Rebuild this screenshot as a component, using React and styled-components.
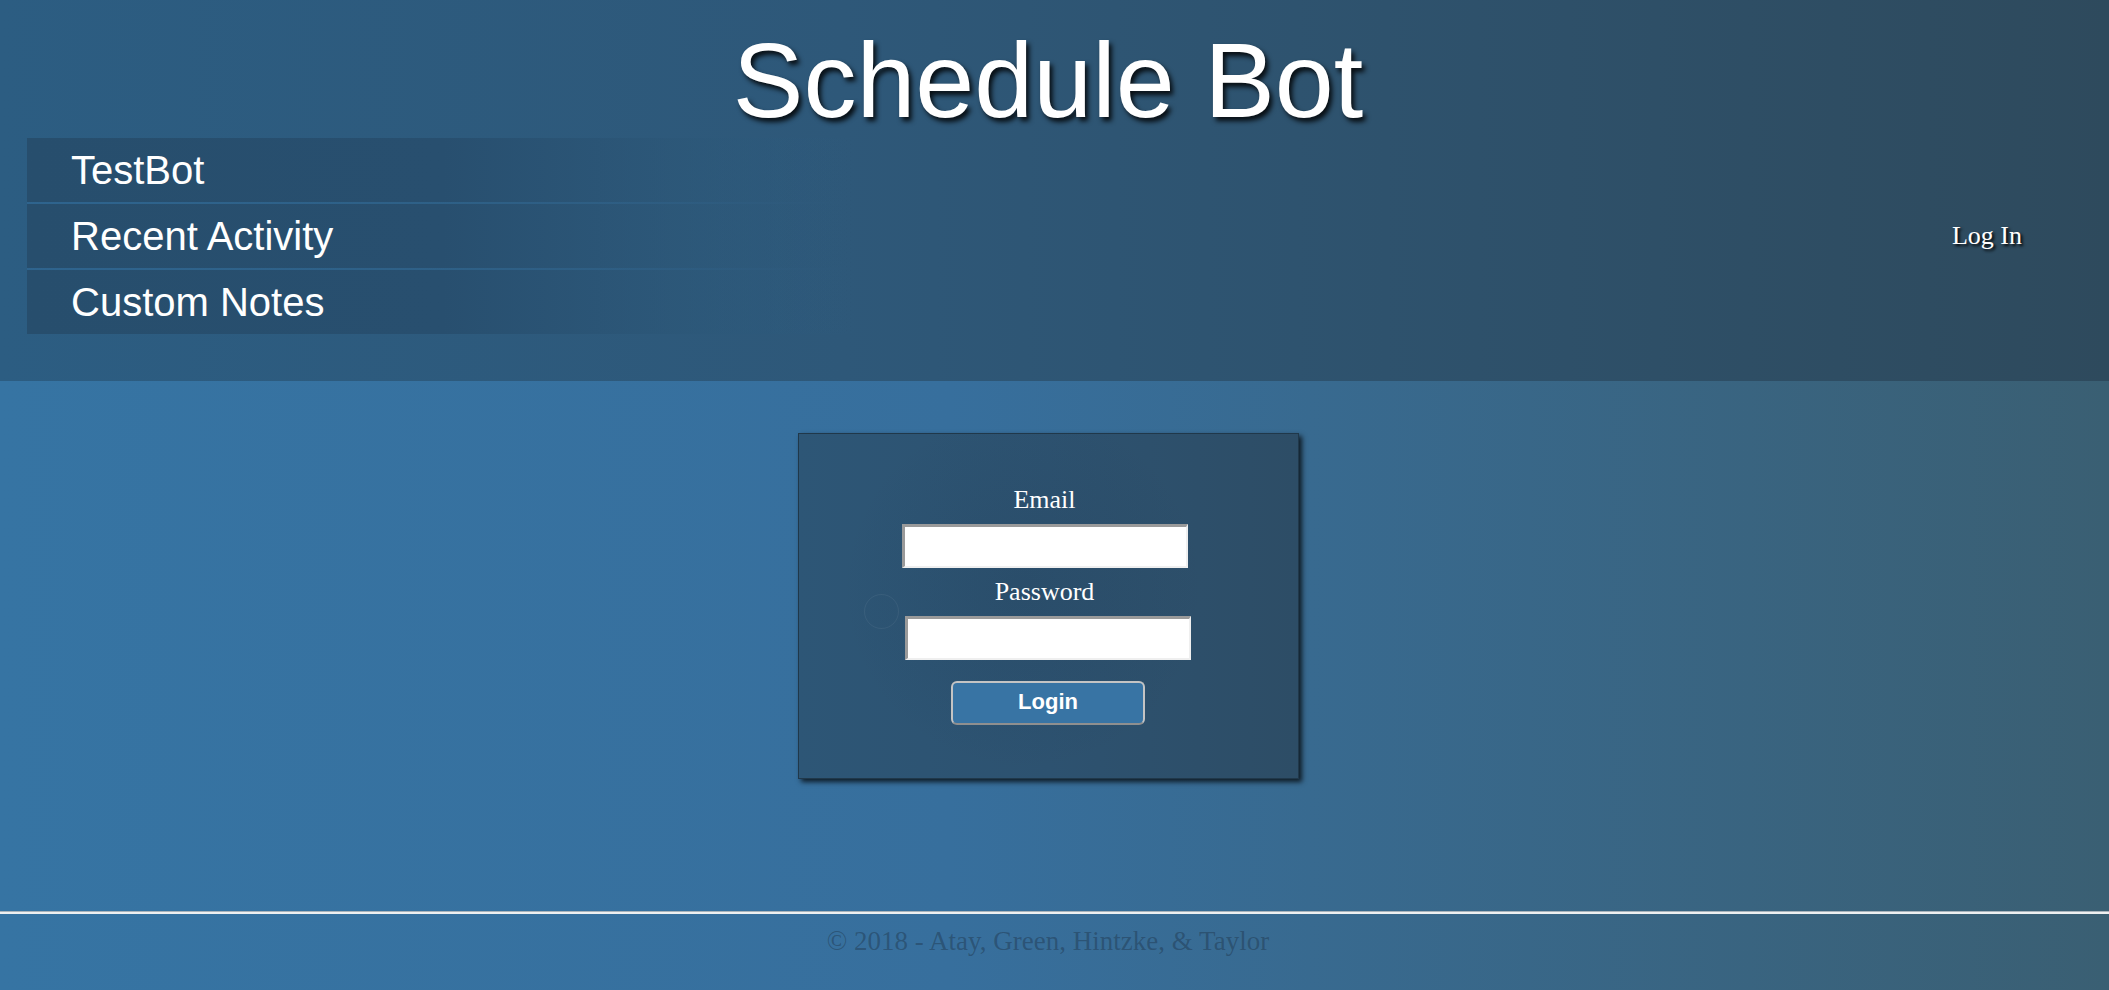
import React from 'react';
import styled, { createGlobalStyle } from "styled-components";

const GlobalStyle = createGlobalStyle`
    html, body {
        margin: 0;
        padding: 0;
    }
    body {
        font-family: "Liberation Serif", "Times New Roman", serif;
        background: linear-gradient(to right, #3674a3 0%, #37709c 40%, #395f73 100%);
        min-height: 990px;
    }
`;

const Page = styled.div`
    min-height: 990px;
    display: flex;
    flex-direction: column;
    background: linear-gradient(to right, #3674a3 0%, #376f9d 45%, #3a5f73 100%);
`;

const Header = styled.header`
    height: 381px;
    box-sizing: border-box;
    padding: 28px 0 0;
    background: linear-gradient(to right, #2c5d82 0%, #2e5879 40%, #2e4a5d 100%);
`;

const Title = styled.h1`
    margin: 0;
    padding-right: 13px;
    text-align: center;
    font-family: "Liberation Sans", Arial, sans-serif;
    font-weight: normal;
    font-size: 106px;
    line-height: 105px;
    color: #fff;
    text-shadow: 3px 4px 5px rgba(0, 0, 0, 0.85);
`;

const NavRow = styled.div`
    margin-top: 5px;
    display: flex;
    align-items: center;
    justify-content: space-between;
    padding: 0 87px 0 27px;
`;

const NavList = styled.nav`
    width: 830px;
    display: flex;
    flex-direction: column;
    gap: 2px;
    background: linear-gradient(to right, rgba(48, 105, 150, 0.6), rgba(48, 105, 150, 0.3) 70%, rgba(48, 105, 150, 0));
`;

const NavItem = styled.a`
    display: block;
    height: 64px;
    padding-left: 44px;
    font-family: "Liberation Sans", Arial, sans-serif;
    font-size: 40px;
    line-height: 64px;
    color: #fff;
    text-decoration: none;
    background: linear-gradient(to right, #274e6d 0%, #284f6f 50%, rgba(44, 86, 118, 0.7) 80%, rgba(44, 86, 118, 0) 100%);
`;

const LogIn = styled.a`
    font-size: 26px;
    color: #fff;
    text-decoration: none;
    text-shadow: 2px 2px 3px #000;
`;

const Main = styled.main`
    flex: 1;
    display: flex;
    justify-content: center;
    align-items: flex-start;
    padding: 52px 13px 0 0;
`;

const LoginBox = styled.form`
    position: relative;
    width: 501px;
    height: 346px;
    box-sizing: border-box;
    padding-top: 51px;
    display: flex;
    flex-direction: column;
    align-items: center;
    border: 1px solid #20384a;
    background:
        radial-gradient(circle at 45% 45%, rgba(20, 40, 60, 0.12) 0, rgba(20, 40, 60, 0) 55%),
        linear-gradient(to right, #2d5676 0%, #2d5270 50%, #2d4d66 100%);
    box-shadow: 3px 3px 5px rgba(0, 0, 0, 0.75);

    // the faint ring on the left of the form
    &::before {
        content: "";
        position: absolute;
        left: 65px;
        top: 160px;
        width: 33px;
        height: 33px;
        border-radius: 50%;
        border: 1px solid rgba(255, 255, 255, 0.06);
    }
`;

const Label = styled.label`
    display: block;
    font-size: 26px;
    line-height: 30px;
    color: #fff;
    margin-right: ${props => props.shift || 0}px;
`;

const Field = styled.input`
    box-sizing: border-box;
    width: 286px;
    height: 44px;
    margin: 9px 0;
    margin-right: ${props => props.shift || 0}px;
    background: #fff;
    border-style: solid;
    border-width: 3px 2px 2px 3px;
    border-color: #9a9a9a #efefef #efefef #9a9a9a;
    outline: none;
`;

const Button = styled.button`
    margin-top: 12px;
    width: 194px;
    height: 44px;
    border: 2px solid #c4c4c4;
    border-bottom-color: #8f8f8f;
    border-radius: 6px;
    background: #3874a4;
    color: #fff;
    font-family: "Liberation Sans", Arial, sans-serif;
    font-weight: bold;
    font-size: 22px;
    line-height: 1;
    padding: 0 0 3px;
    cursor: pointer;
`;

const Footer = styled.footer`
    height: 79px;
`;

const Rule = styled.div`
    height: 1px;
    background: #a9b4bc;
    border-bottom: 2px solid #eef0f1;
`;

const Copy = styled.p`
    margin: 12px 0 0;
    padding-right: 13px;
    text-align: center;
    font-size: 27px;
    line-height: 30px;
    color: rgba(28, 48, 68, 0.42);
`;

const App = () => (
    <Page>
        <GlobalStyle />
        <Header>
            <Title>Schedule Bot</Title>
            <NavRow>
                <NavList>
                    <NavItem href="#">TestBot</NavItem>
                    <NavItem href="#">Recent Activity</NavItem>
                    <NavItem href="#">Custom Notes</NavItem>
                </NavList>
                <LogIn href="#">Log In</LogIn>
            </NavRow>
        </Header>
        <Main>
            <LoginBox onSubmit={e => e.preventDefault()}>
                <Label shift={7}>Email</Label>
                <Field type="email" shift={7} />
                <Label shift={7}>Password</Label>
                <Field type="password" />
                <Button type="submit">Login</Button>
            </LoginBox>
        </Main>
        <Footer>
            <Rule />
            <Copy>© 2018 - Atay, Green, Hintzke, &amp; Taylor</Copy>
        </Footer>
    </Page>
);

export default App;
